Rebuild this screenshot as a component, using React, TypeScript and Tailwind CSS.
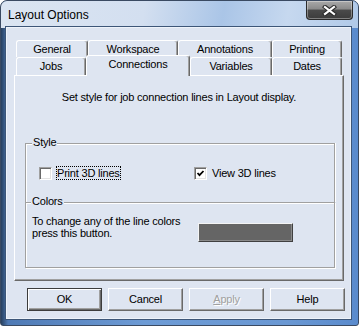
import React from "react";

const tabBase =
  "flex justify-center border-l border-t border-r border-l-white border-t-white border-r-[#696969] shadow-[inset_-1px_0_0_#a0a0a0] rounded-t-[3px] bg-[#dee5f1] text-[11px] leading-[13px] tracking-[-0.2px]";

function Checkbox({ checked }: { checked?: boolean }) {
  return (
    <div className="w-[13px] h-[13px] bg-white border border-t-[#a0a0a0] border-l-[#a0a0a0] border-r-white border-b-white shadow-[inset_1px_1px_0_#696969,inset_-1px_-1px_0_#e3e3e3] flex items-center justify-center">
      {checked && (
        <svg width="9" height="9" viewBox="0 0 9 9">
          <polyline points="1.5,4 3.5,6.2 7.5,2" fill="none" stroke="#000" strokeWidth="1.8" />
        </svg>
      )}
    </div>
  );
}

export default function App() {
  return (
    <div className="w-[359px] h-[326px] flex flex-col border border-[#3a4a62] rounded-t-[7px] rounded-b-[3px] overflow-hidden bg-[linear-gradient(to_right,#27405f_0%,#4f7ab5_2%,#6d9bd5_40%,#6a98d3_80%,#5a8bcd_100%)] font-['Liberation_Sans',Arial,sans-serif] text-black">
      <div className="h-[27px] shrink-0 flex items-start bg-[linear-gradient(100deg,#dbe5f2_0%,#d3dff0_40%,#aac5e7_62%,#c6d8ef_80%,#b0c9e8_100%)]">
        <span className="pl-[7px] pt-[6px] text-[12px] leading-[16px]">Layout Options</span>
        <div className="ml-auto mr-[5px] w-[47px] h-[19px] rounded-b-[4px] border border-t-0 border-[#2b2b2b] bg-[linear-gradient(to_bottom,#a9a9a9_0%,#8a8a8a_45%,#4a4a4a_50%,#3c3c3c_100%)] shadow-[inset_0_0_0_1px_rgba(255,255,255,0.35)] flex items-center justify-center">
          <svg width="15" height="11" viewBox="0 0 15 11">
            <path d="M3 2 L12 9 M12 2 L3 9" stroke="#2a2a2a" strokeWidth="4.2" strokeLinecap="square" />
            <path d="M3 2 L12 9 M12 2 L3 9" stroke="#ffffff" strokeWidth="2.2" strokeLinecap="square" />
          </svg>
        </div>
      </div>

      <div className="ml-[6px] w-[343px] h-[290px] shrink-0 bg-[#dee5f1] flex flex-col shadow-[0_0_0_1px_#eef3fa,0_0_0_2px_#3d5678] text-[11px] leading-[13px] tracking-[-0.2px]">
        <div className="mt-[12px] ml-[7px] w-[330px] flex flex-col">
          <div className="flex h-[17px] pl-[2px]">
            <div className={`${tabBase} w-[72px] h-[17px] items-center`}>General</div>
            <div className={`${tabBase} w-[90px] h-[17px] items-center`}>Workspace</div>
            <div className={`${tabBase} w-[94px] h-[17px] items-center`}>Annotations</div>
            <div className={`${tabBase} w-[70px] h-[17px] items-center`}>Printing</div>
          </div>
          <div className="flex h-[18px] pl-[2px] items-start relative z-10">
            <div className={`${tabBase} w-[70px] h-[18px] items-center`}>Jobs</div>
            <div className={`${tabBase} w-[104px] h-[21px] -mt-[2px] items-start pt-[2px]`}>Connections</div>
            <div className={`${tabBase} w-[82px] h-[18px] items-center`}>Variables</div>
            <div className={`${tabBase} w-[70px] h-[18px] items-center`}>Dates</div>
          </div>
          <div className="h-[206px] w-[330px] border border-l-white border-t-white border-r-[#696969] border-b-[#696969] shadow-[inset_-1px_-1px_0_#a0a0a0] flex flex-col">
            <p className="mt-[15px] text-center">Set style for job connection lines in Layout display.</p>

            <div className="mt-[39px] ml-[10px] w-[310px] h-[59px] border-l border-t border-r border-[#a0a0a0] shadow-[inset_1px_1px_0_#fff,1px_0_0_#fff] relative">
              <span className="absolute -top-[8px] left-[6px] px-[1px] bg-[#dee5f1]">Style</span>
              <div className="flex items-center pt-[22px] pl-[13px]">
                <div className="w-[155px] flex items-center">
                  <Checkbox />
                  <span className="ml-[4px] border border-dotted border-black px-[0px] leading-[12px]">Print 3D lines</span>
                </div>
                <div className="flex items-center">
                  <Checkbox checked />
                  <span className="ml-[5px]">View 3D lines</span>
                </div>
              </div>
            </div>

            <div className="ml-[10px] w-[310px] h-[66px] border border-[#a0a0a0] shadow-[inset_1px_1px_0_#fff,1px_1px_0_#fff] relative">
              <span className="absolute -top-[8px] left-[5px] px-[1px] bg-[#dee5f1]">Colors</span>
              <div className="flex pt-[12px] pl-[6px]">
                <div className="w-[166px] leading-[12px]">
                  To change any of the line colors
                  <br />
                  press this button.
                </div>
                <div className="mt-[8px] w-[95px] h-[19px] bg-[#656565] border border-t-[#f4f4f4] border-l-[#f4f4f4] border-r-[#404040] border-b-[#404040] shadow-[inset_-1px_-1px_0_#8a8a8a]" />
              </div>
            </div>
          </div>
        </div>

        <div className="mt-[7px] pl-[20px] flex gap-[6px]">
          <div className="w-[75px] h-[23px] border border-[#3c3c3c] shadow-[inset_1px_1px_0_#fff,inset_-1px_-1px_0_#696969,inset_-2px_-2px_0_#a0a0a0] flex items-center justify-center">OK</div>
          <div className="w-[75px] h-[23px] border border-t-white border-l-white border-r-[#696969] border-b-[#696969] shadow-[inset_-1px_-1px_0_#a0a0a0] flex items-center justify-center">Cancel</div>
          <div className="w-[75px] h-[23px] border border-t-white border-l-white border-r-[#696969] border-b-[#696969] shadow-[inset_-1px_-1px_0_#a0a0a0] flex items-center justify-center text-[#a0a0a0] [text-shadow:1px_1px_0_#fff]">
            <span><span className="underline">A</span>pply</span>
          </div>
          <div className="w-[75px] h-[23px] border border-t-white border-l-white border-r-[#696969] border-b-[#696969] shadow-[inset_-1px_-1px_0_#a0a0a0] flex items-center justify-center">Help</div>
        </div>
      </div>
    </div>
  );
}
